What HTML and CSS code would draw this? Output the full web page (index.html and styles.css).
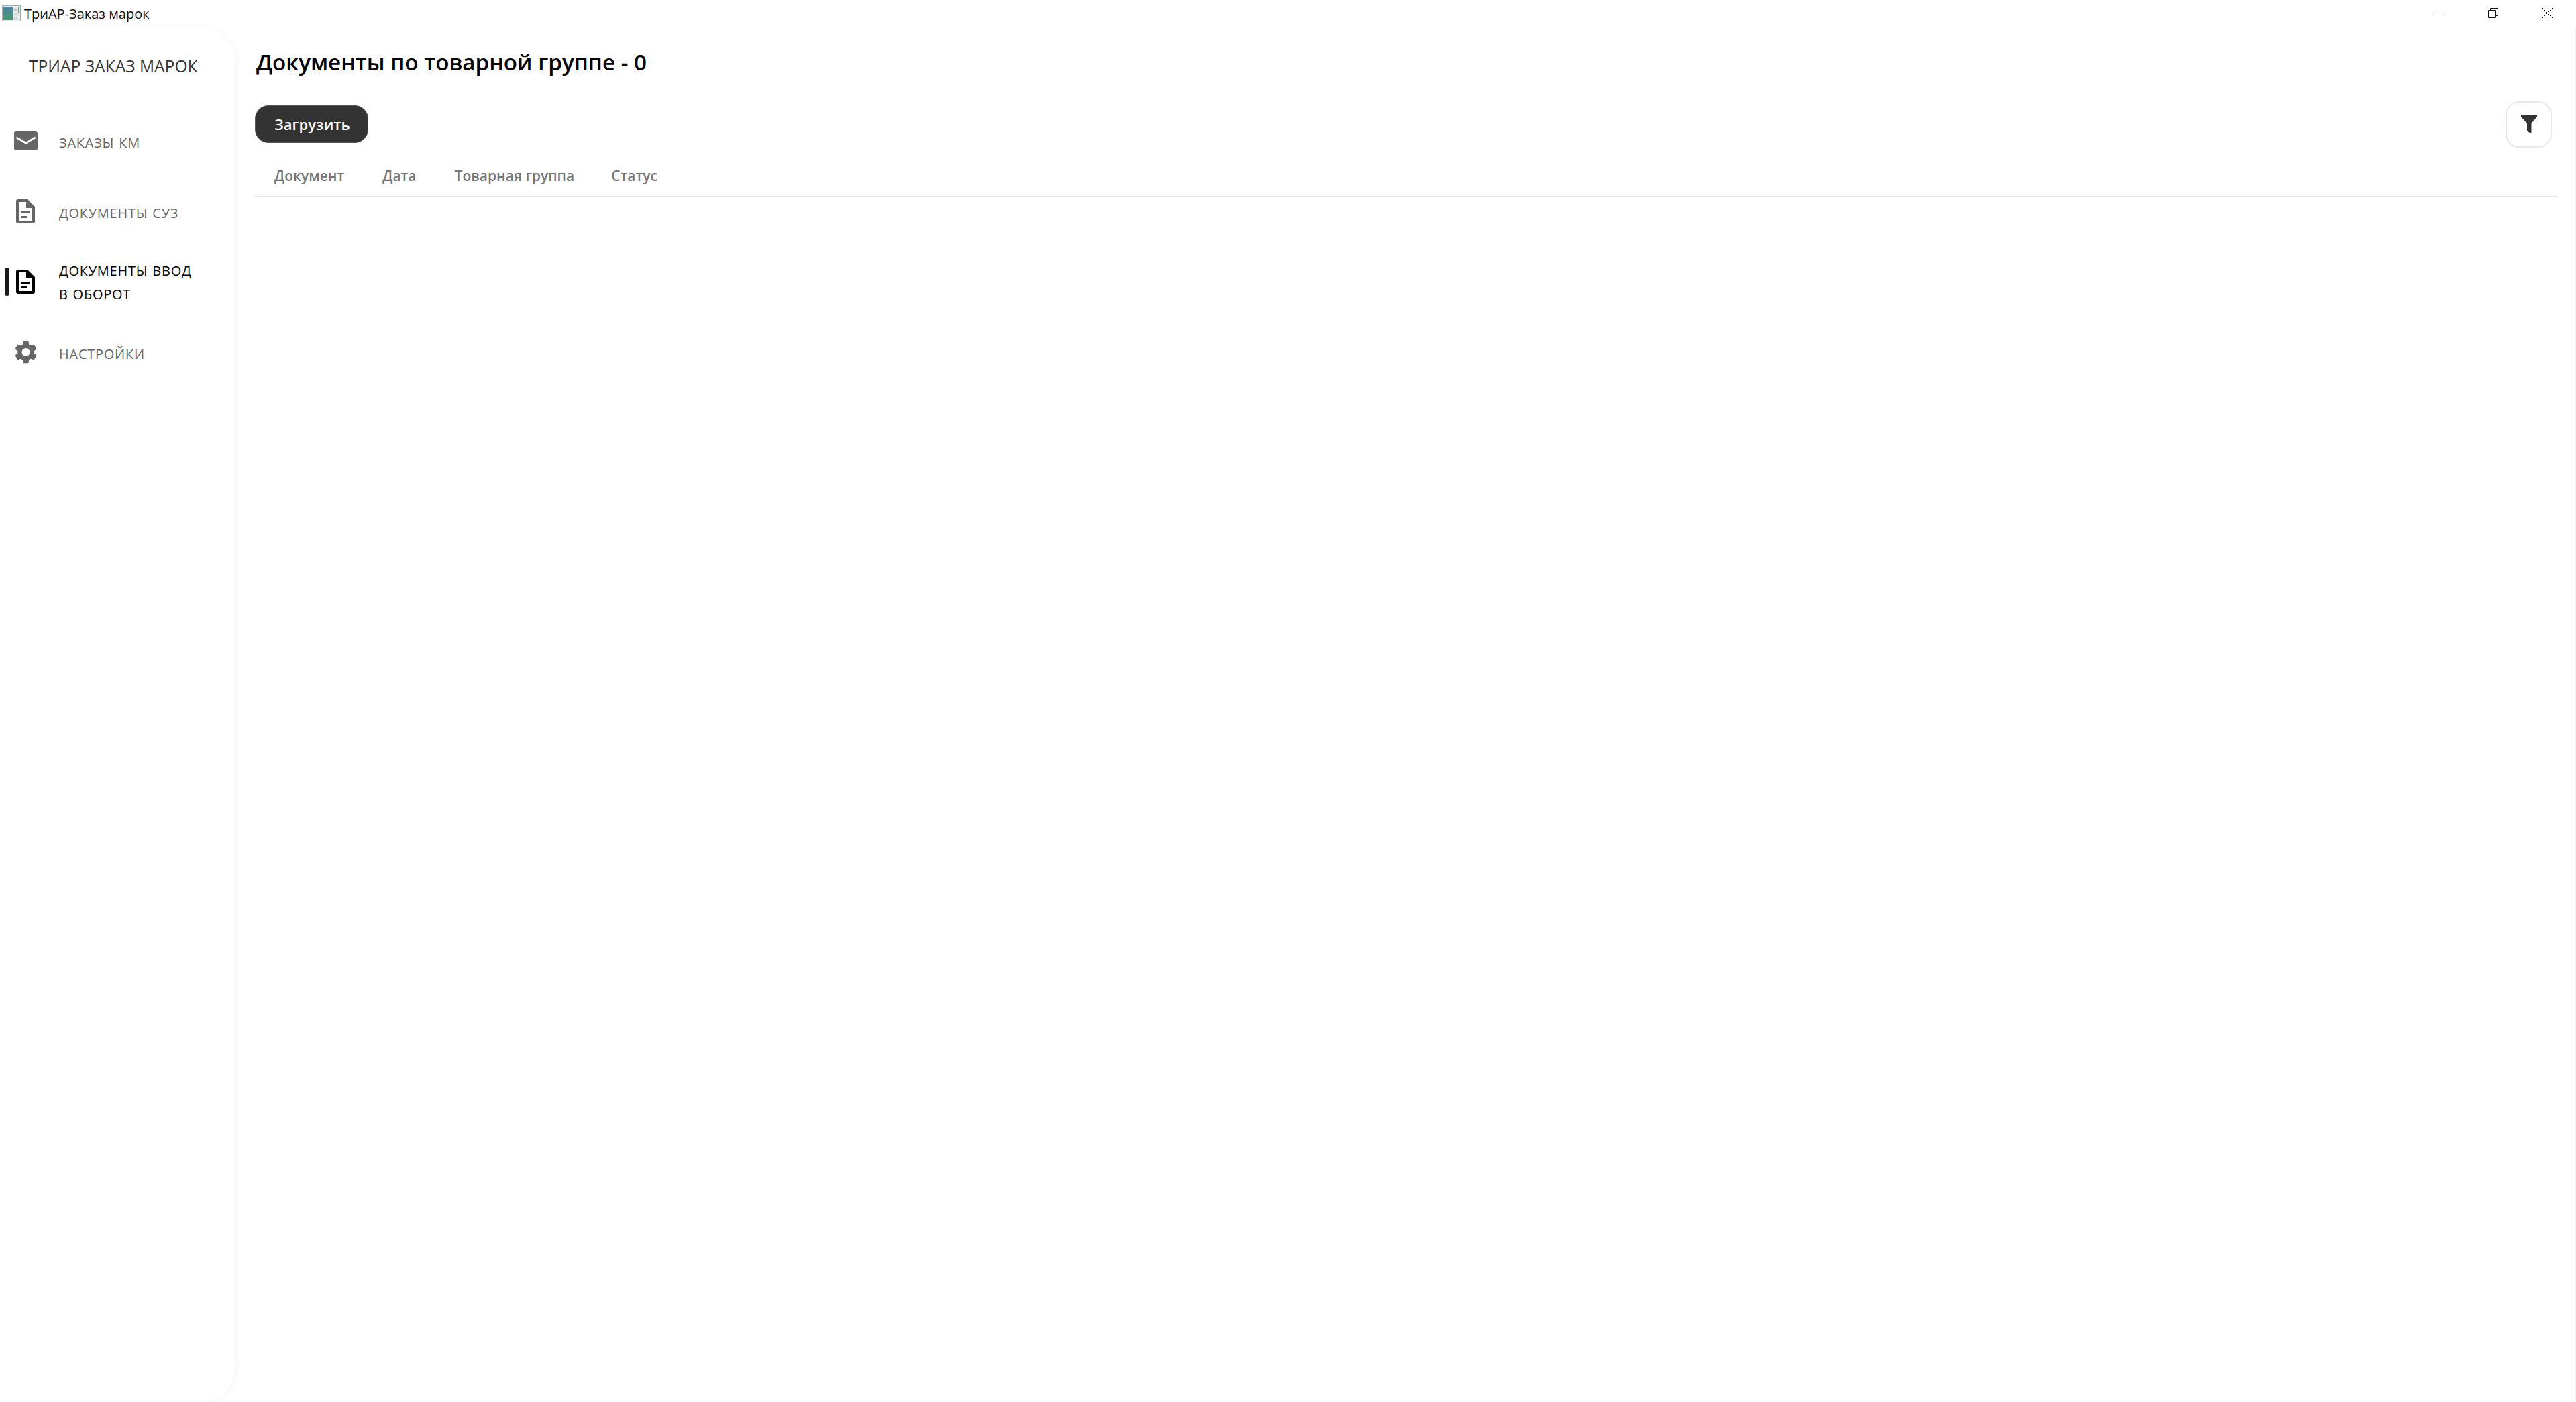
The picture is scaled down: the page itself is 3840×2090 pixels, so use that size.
FILE: index.html
```html
<!DOCTYPE html>
<html lang="ru">
<head>
<meta charset="utf-8">
<title>ТриАР-Заказ марок</title>
<link rel="stylesheet" href="styles.css">
</head>
<body>
<div class="app">
  <header class="titlebar">
    <div class="titlebar-left">
      <svg class="app-icon" width="28" height="24" viewBox="0 0 28 24">
        <defs><linearGradient id="g" x1="0" y1="0" x2="0" y2="1"><stop offset="0" stop-color="#4a84ad"/><stop offset="1" stop-color="#469a6a"/></linearGradient></defs>
        <rect x="0.5" y="0.5" width="27" height="23" fill="#e6e9ea" stroke="#a4acb0"/>
        <rect x="2" y="2" width="14" height="20" fill="url(#g)"/>
        <rect x="18" y="6" width="4" height="3" fill="#c6cccc"/>
        <rect x="18" y="12" width="5" height="3" fill="#cfd4d4"/>
        <rect x="18" y="17" width="4" height="3" fill="#cfd4d4"/>
        <rect x="24" y="2" width="2" height="9" fill="#5fa08a"/>
      </svg>
      <span class="app-name">ТриАР-Заказ марок</span>
    </div>
    <div class="window-controls">
      <svg class="win-btn" width="15" height="15" viewBox="0 0 15 15"><path d="M0 7.500H15" stroke="#111" fill="none"/></svg>
      <svg class="win-btn" width="15" height="15" viewBox="0 0 15 15"><path d="M0.500 3.500H11.500V14.500H0.500ZM3.500 3.500V0.500H14.500V11.500H11.500" stroke="#111" fill="none"/></svg>
      <svg class="win-btn" width="15" height="15" viewBox="0 0 15 15"><path d="M0 0L15 15M15 0L0 15" stroke="#111" fill="none"/></svg>
    </div>
  </header>
  <div class="body-row">
    <aside class="sidebar">
      <div class="brand">ТРИАР ЗАКАЗ МАРОК</div>
      <nav class="nav">
        <a class="nav-item">
          <span class="marker"></span>
          <svg class="nav-icon" width="35" height="28" viewBox="0 0 35 28"><path fill="currentColor" fill-rule="evenodd" d="M3 0H32a3 3 0 0 1 3 3V25a3 3 0 0 1-3 3H3a3 3 0 0 1-3-3V3a3 3 0 0 1 3-3ZM4 7.500 2.600 10 17.500 18.800 32.400 10 31 7.500 17.500 15.400Z"/></svg>
          <span class="nav-text">ЗАКАЗЫ КМ</span>
        </a>
        <a class="nav-item">
          <span class="marker"></span>
          <svg class="nav-icon" width="35" height="36" viewBox="0 0 35 36"><path fill="currentColor" fill-rule="evenodd" d="M6 0H20L31 11V33a3 3 0 0 1-3 3H6a3 3 0 0 1-3-3V3a3 3 0 0 1 3-3ZM7 4V32H27V13H18V4ZM10 18H24V21H10ZM10 25H19V28H10Z"/></svg>
          <span class="nav-text">ДОКУМЕНТЫ СУЗ</span>
        </a>
        <a class="nav-item active">
          <span class="marker"></span>
          <svg class="nav-icon" width="35" height="36" viewBox="0 0 35 36"><path fill="currentColor" fill-rule="evenodd" d="M6 0H20L31 11V33a3 3 0 0 1-3 3H6a3 3 0 0 1-3-3V3a3 3 0 0 1 3-3ZM7 4V32H27V13H18V4ZM10 18H24V21H10ZM10 25H19V28H10Z"/></svg>
          <span class="nav-text">ДОКУМЕНТЫ ВВОД<br>В ОБОРОТ</span>
        </a>
        <a class="nav-item">
          <span class="marker"></span>
          <svg class="nav-icon" width="35" height="36" viewBox="0 0 24 24"><path fill="currentColor" transform="translate(12 12) scale(1.16) translate(-12 -12)" d="M19.140 12.940c.04-.3.06-.61.06-.94s-.02-.64-.07-.94l2.030-1.580a.49.49 0 0 0 .12-.61l-1.920-3.320a.49.49 0 0 0-.59-.22l-2.390.96a7 7 0 0 0-1.620-.94l-.36-2.540a.48.48 0 0 0-.48-.41h-3.840a.48.48 0 0 0-.47.41l-.36 2.540c-.59.24-1.130.57-1.620.94l-2.390-.96a.49.49 0 0 0-.59.22L2.740 8.870a.48.48 0 0 0 .12.61l2.030 1.580c-.05.3-.09.63-.09.94s.02.64.07.94l-2.030 1.580a.49.49 0 0 0-.12.61l1.920 3.320c.12.22.37.29.59.22l2.390-.96c.5.38 1.030.7 1.620.94l.36 2.540c.05.24.24.41.48.41h3.840c.24 0 .44-.17.47-.41l.36-2.540a7 7 0 0 0 1.620-.94l2.390.96c.22.08.47 0 .59-.22l1.920-3.320a.48.48 0 0 0-.12-.61ZM12 15.600A3.600 3.600 0 1 1 12 8.400a3.600 3.600 0 0 1 0 7.200Z"/></svg>
          <span class="nav-text">НАСТРОЙКИ</span>
        </a>
      </nav>
    </aside>
    <main class="main">
      <h1 class="page-title">Документы по товарной группе - 0</h1>
      <div class="toolbar">
        <button class="load-btn">Загрузить</button>
        <button class="filter-btn" aria-label="Фильтр">
          <svg width="24" height="27" viewBox="0 0 24 27"><path fill="#333" d="M0 0H24V2L15.500 12V25.500L14 27 9 23V12L0 2Z"/></svg>
        </button>
      </div>
      <div class="table-head">
        <span class="col col-doc">Документ</span>
        <span class="col col-date">Дата</span>
        <span class="col col-group">Товарная группа</span>
        <span class="col col-status">Статус</span>
      </div>
    </main>
  </div>
</div>
</body>
</html>
```
FILE: styles.css
```css
* { box-sizing: border-box; }
html, body { margin: 0; padding: 0; height: 100%; background: #fff; }
body { font-family: "Open Sans", "Noto Sans", sans-serif; color: #000; overflow: hidden; }
.app { display: flex; flex-direction: column; height: 2090px; width: 3840px; }

.titlebar { height: 40px; flex: none; display: flex; justify-content: space-between; align-items: flex-start; }
.titlebar-left { display: flex; align-items: center; height: 40px; padding-left: 3px; }
.app-icon { margin-top: -1px; }
.app-name { font-size: 20px; line-height: 40px; margin-left: 5px; padding-top: 1px; color: #111; }
.window-controls { display: flex; gap: 66px; padding: 12px 35px 0 0; }
.win-btn { display: block; }

.body-row { flex: 1; display: flex; min-height: 0; border-right: 1px solid #f4f4f4; }
.sidebar { width: 350px; flex: none; background: #fff; border-radius: 0 50px 50px 0; box-shadow: 4px 0 12px rgba(0,0,0,.035); }
.brand { height: 117px; padding: 41px 0 0 43px; font-size: 24.600px; line-height: 35px; color: #333; white-space: nowrap; }
.nav { display: flex; flex-direction: column; }
.nav-item { height: 105px; display: flex; align-items: center; padding-left: 7px; color: #666; }
.marker { width: 7px; height: 42px; border-radius: 4px; flex: none; }
.nav-icon { flex: none; margin-left: 7px; display: block; }
.nav-text { margin-left: 32px; font-size: 20px; line-height: 35px; letter-spacing: .75px; word-spacing: 1px; padding-top: 5px; }
.active { color: #000; }
.active .marker { background: #1a1a1a; }
.active .nav-text { padding-top: 3px; }

.main { flex: 1; min-width: 0; padding: 0 27px 0 30px; }
.page-title { margin: 0; padding: 30px 0 0 2px; height: 110px; font-size: 33.200px; line-height: 45px; font-weight: 600; white-space: nowrap; }
.toolbar { display: flex; justify-content: space-between; align-items: center; height: 70px; padding-right: 8px; }
.load-btn { width: 169px; height: 56px; border: 1px solid #555; border-radius: 20px; background: #333; color: #fff; font: 600 22px/1 "Open Sans", sans-serif; padding: 0 0 0 2px; }
.filter-btn { width: 69px; height: 69px; border: 2px solid #e8e8e8; border-radius: 20px; background: #fff; display: flex; align-items: center; justify-content: center; padding: 0; }
.table-head { display: flex; height: 74px; align-items: flex-end; padding-bottom: 15px; border-bottom: 2px solid #e6e6e6; }
.col { font-size: 21px; line-height: 30px; color: #777; font-weight: 600; white-space: nowrap; }
.col-doc { margin-left: 29px; }
.col-date { margin-left: 57px; }
.col-group { margin-left: 57px; }
.col-status { margin-left: 55px; }
```
